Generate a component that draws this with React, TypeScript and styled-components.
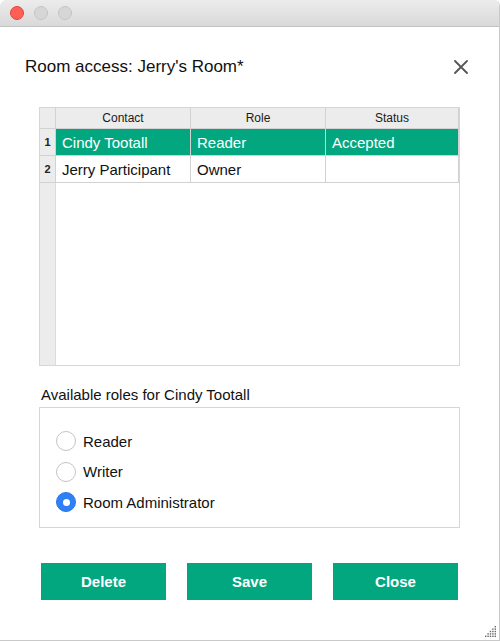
import React from "react";
import styled, { createGlobalStyle } from "styled-components";

const Global = createGlobalStyle`
  html, body { margin: 0; padding: 0; background: #ffffff; }
  body { font-family: "Liberation Sans", Arial, sans-serif; color: #111; }
  * { box-sizing: border-box; }
`;

const Window = styled.div`
  width: 500px;
  height: 641px;
  display: flex;
  flex-direction: column;
  background: #fff;
  border: 1px solid #c9c9c9;
  border-top: none;
  border-left: none;
  border-radius: 6px 6px 0 0;
  overflow: hidden;
  position: relative;
`;

const TitleBar = styled.div`
  height: 27px;
  flex: none;
  display: flex;
  align-items: center;
  gap: 10px;
  padding-left: 10px;
  background: linear-gradient(#ececec, #d9d9d9);
  border-bottom: 1px solid #c3c3c3;
`;

const Light = styled.span<{ $color: string; $border: string }>`
  width: 14px;
  height: 14px;
  border-radius: 50%;
  background: ${(p) => p.$color};
  border: 1px solid ${(p) => p.$border};
`;

const Header = styled.div`
  height: 80px;
  flex: none;
  display: flex;
  align-items: center;
  justify-content: space-between;
  padding: 0 30px 0 25px;
`;

const Title = styled.h1`
  margin: 0;
  font-size: 17px;
  font-weight: 400;
  color: #111;
`;

const CloseIcon = styled.button`
  width: 16px;
  height: 16px;
  padding: 0;
  border: none;
  background: none;
  display: flex;
  align-items: center;
  justify-content: center;
`;

const Body = styled.div`
  padding: 0 39px;
  display: flex;
  flex-direction: column;
`;

const Grid = styled.div`
  height: 259px;
  border: 1px solid #d6d6d6;
  background: linear-gradient(to right, #ececec 0, #ececec 15px, #dcdcdc 15px, #dcdcdc 16px, #fff 16px);
  display: grid;
  grid-template-columns: 16px 135px 135px 133px;
  grid-template-rows: 21px 27px 27px;
  align-content: start;
`;

const HeadCell = styled.div`
  background: #ececec;
  border-right: 1px solid #d2d2d2;
  border-bottom: 1px solid #d2d2d2;
  font-size: 12px;
  font-weight: 400;
  display: flex;
  align-items: center;
  justify-content: center;
  color: #1a1a1a;
`;

const RowNum = styled.div`
  background: #ececec;
  border-right: 1px solid #d2d2d2;
  border-bottom: 1px solid #d2d2d2;
  font-size: 11px;
  font-weight: 700;
  display: flex;
  align-items: center;
  justify-content: center;
  color: #222;
`;

const Cell = styled.div<{ $selected?: boolean }>`
  background: ${(p) => (p.$selected ? "#03a77f" : "#fff")};
  color: ${(p) => (p.$selected ? "#fff" : "#111")};
  border-right: 1px solid #d2d2d2;
  border-bottom: 1px solid #d2d2d2;
  font-size: 15px;
  display: flex;
  align-items: center;
  padding-left: 6px;
  white-space: nowrap;
`;

const SectionLabel = styled.div`
  font-size: 15px;
  margin: 19px 0 3px 2px;
  height: 19px;
  line-height: 19px;
`;

const RoleBox = styled.div`
  height: 121px;
  border: 1px solid #d6d6d6;
  padding: 23px 0 0 16px;
  display: flex;
  flex-direction: column;
  gap: 10.5px;
`;

const RadioRow = styled.label`
  display: flex;
  align-items: center;
  gap: 7px;
  font-size: 15px;
  height: 20px;
`;

const RadioDot = styled.span<{ $checked?: boolean }>`
  width: 20px;
  height: 20px;
  border-radius: 50%;
  background: ${(p) => (p.$checked ? "#2f80f6" : "#fff")};
  border: 1px solid ${(p) => (p.$checked ? "#2a76e8" : "#c4c4c4")};
  display: flex;
  align-items: center;
  justify-content: center;
  &::after {
    content: "";
    width: 7px;
    height: 7px;
    border-radius: 50%;
    background: #fff;
    display: ${(p) => (p.$checked ? "block" : "none")};
  }
`;

const Buttons = styled.div`
  display: flex;
  justify-content: space-between;
  padding: 0 2px;
  margin-top: 35px;
`;

const Button = styled.button`
  width: 125px;
  height: 37px;
  border: none;
  background: #03a77f;
  color: #fff;
  font-family: inherit;
  font-size: 15px;
  font-weight: 700;
  padding: 0;
`;

const Grip = styled.svg`
  position: absolute;
  right: 2px;
  bottom: 2px;
`;

const rows = [
  { n: 1, contact: "Cindy Tootall", role: "Reader", status: "Accepted", selected: true },
  { n: 2, contact: "Jerry Participant", role: "Owner", status: "", selected: false },
];

export default function App() {
  const gripDots: [number, number][] = [];
  for (let r = 0; r < 5; r++) {
    for (let c = 4 - r; c < 5; c++) gripDots.push([c * 2.4, r * 2.4]);
  }
  return (
    <>
      <Global />
      <Window>
        <TitleBar>
          <Light $color="#fe5f57" $border="#e0443e" />
          <Light $color="#d6d6d6" $border="#c4c4c4" />
          <Light $color="#d6d6d6" $border="#c4c4c4" />
        </TitleBar>
        <Header>
          <Title>Room access: Jerry's Room*</Title>
          <CloseIcon aria-label="close">
            <svg width="14" height="14" viewBox="0 0 14 14">
              <path d="M1 1 L13 13 M13 1 L1 13" stroke="#555" strokeWidth="1.8" strokeLinecap="round" />
            </svg>
          </CloseIcon>
        </Header>
        <Body>
          <Grid>
            <HeadCell />
            <HeadCell>Contact</HeadCell>
            <HeadCell>Role</HeadCell>
            <HeadCell>Status</HeadCell>
            {rows.map((r) => (
              <React.Fragment key={r.n}>
                <RowNum>{r.n}</RowNum>
                <Cell $selected={r.selected}>{r.contact}</Cell>
                <Cell $selected={r.selected}>{r.role}</Cell>
                <Cell $selected={r.selected}>{r.status}</Cell>
              </React.Fragment>
            ))}
          </Grid>
          <SectionLabel>Available roles for Cindy Tootall</SectionLabel>
          <RoleBox>
            <RadioRow><RadioDot />Reader</RadioRow>
            <RadioRow><RadioDot />Writer</RadioRow>
            <RadioRow><RadioDot $checked />Room Administrator</RadioRow>
          </RoleBox>
          <Buttons>
            <Button>Delete</Button>
            <Button>Save</Button>
            <Button>Close</Button>
          </Buttons>
        </Body>
        <Grip width="12" height="12" viewBox="0 0 12 12">
          {gripDots.map(([x, y], i) => (
            <rect key={i} x={x} y={y} width="1.4" height="1.4" fill="#666" />
          ))}
        </Grip>
      </Window>
    </>
  );
}
